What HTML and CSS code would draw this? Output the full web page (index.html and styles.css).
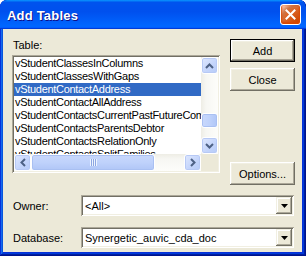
FILE: index.html
```html
<!DOCTYPE html>
<html lang="en">
<head>
    <meta charset="UTF-8">
    <title>Add Tables</title>
    <link rel="stylesheet" href="styles.css">
</head>
<body>
    <div class="window">
        <div class="titlebar">
            <span class="title">Add Tables</span>
            <button class="close">
                <svg width="11" height="11" viewBox="0 0 11 11"><path d="M1.5 1.5 L9.5 9.5 M9.5 1.5 L1.5 9.5" stroke="#fff" stroke-width="2" stroke-linecap="square"/></svg>
            </button>
        </div>
        <div class="dialog">
            <div class="top">
                <div class="table-col">
                    <div class="label">Table:</div>
                    <div class="listbox">
                        <div class="list-area">
                            <ul class="items">
                                <li>vStudentClassesInColumns</li>
                                <li>vStudentClassesWithGaps</li>
                                <li class="selected">vStudentContactAddress</li>
                                <li>vStudentContactAllAddress</li>
                                <li>vStudentContactsCurrentPastFutureCombined</li>
                                <li>vStudentContactsParentsDebtor</li>
                                <li>vStudentContactsRelationOnly</li>
                                <li>vStudentContactsSplitFamilies</li>
                            </ul>
                            <div class="vscroll">
                                <div class="sbtn">
                                    <svg width="9" height="6" viewBox="0 0 9 6"><path d="M1 5 L4.5 1.5 L8 5" fill="none" stroke="#4d6185" stroke-width="2"/></svg>
                                </div>
                                <div class="vtrack"><div class="vthumb"></div></div>
                                <div class="sbtn">
                                    <svg width="9" height="6" viewBox="0 0 9 6"><path d="M1 1 L4.5 4.5 L8 1" fill="none" stroke="#4d6185" stroke-width="2"/></svg>
                                </div>
                            </div>
                        </div>
                        <div class="hscroll-row">
                            <div class="hscroll">
                                <div class="sbtn">
                                    <svg width="6" height="9" viewBox="0 0 6 9"><path d="M5 1 L1.5 4.5 L5 8" fill="none" stroke="#4d6185" stroke-width="2"/></svg>
                                </div>
                                <div class="htrack">
                                    <div class="hthumb"><span class="grip"></span></div>
                                </div>
                                <div class="sbtn">
                                    <svg width="6" height="9" viewBox="0 0 6 9"><path d="M1 1 L4.5 4.5 L1 8" fill="none" stroke="#4d6185" stroke-width="2"/></svg>
                                </div>
                            </div>
                            <div class="corner"></div>
                        </div>
                    </div>
                </div>
                <div class="actions">
                    <button class="btn default">Add</button>
                    <button class="btn">Close</button>
                    <button class="btn options">Options...</button>
                </div>
            </div>
            <div class="fields">
                <div class="field">
                    <span class="field-label">Owner:</span>
                    <div class="combo">
                        <span class="combo-text">&lt;All&gt;</span>
                        <span class="drop"><svg width="7" height="4" viewBox="0 0 7 4"><path d="M0 0 H7 L3.5 4 Z" fill="#000"/></svg></span>
                    </div>
                </div>
                <div class="field">
                    <span class="field-label">Database:</span>
                    <div class="combo">
                        <span class="combo-text">Synergetic_auvic_cda_doc</span>
                        <span class="drop"><svg width="7" height="4" viewBox="0 0 7 4"><path d="M0 0 H7 L3.5 4 Z" fill="#000"/></svg></span>
                    </div>
                </div>
            </div>
        </div>
    </div>
</body>
</html>
```
FILE: styles.css
```css
body {
    margin: 0;
    background: #ffffff;
    font-family: 'Liberation Sans', Arial, sans-serif;
    font-size: 11px;
    color: #000;
}
.window {
    width: 306px;
    height: 256px;
    display: flex;
    flex-direction: column;
    background: #0831d9;
    border-radius: 7px 7px 0 0;
    box-shadow: inset -1px -1px #00138c, inset 1px 1px #0831d9, inset -2px -2px #001ea0, inset 2px 2px #166aee, inset -3px -3px #003bda, inset 3px 3px #0855dd;
    overflow: hidden;
}
.titlebar {
    height: 29px;
    flex: none;
    display: flex;
    align-items: center;
    justify-content: space-between;
    padding: 0 5px 0 7px;
    background: linear-gradient(180deg, #0997ff, #0053ee 8%, #0050ee 40%, #0066ff 88%, #0066ff 93%, #005bff 95%, #003dd7 96%, #003dd7);
    border-radius: 7px 7px 0 0;
}
.title {
    color: #fff;
    font-weight: bold;
    font-size: 13px;
    letter-spacing: 0.2px;
    text-shadow: 1px 1px #0f1089;
    padding-top: 1px;
}
.close {
    width: 21px;
    height: 21px;
    padding: 0;
    border: 1px solid #fff;
    border-radius: 3px;
    display: flex;
    align-items: center;
    justify-content: center;
    background: radial-gradient(circle at 90% 90%, #cc4600 0, #dc6527 55%, #cd7546 70%, #ffccb2 90%, #fff 100%);
    box-shadow: inset 0 -1px 2px 1px #da4600;
}
.dialog {
    flex: 1;
    margin: 0 4px 4px 3px;
    background: #ece9d8;
    padding: 10px 0 0 9px;
}
.top {
    display: flex;
    gap: 10px;
    height: 146px;
}
.table-col {
    width: 208px;
}
.label {
    height: 16px;
    line-height: 13px;
    padding-left: 1px;
}
.listbox {
    height: 118px;
    box-sizing: border-box;
    padding: 2px;
    background: #fff;
    box-shadow: inset 1px 1px #aca899, inset -1px -1px #fff, inset 2px 2px #716f64, inset -2px -2px #f1efe2;
    display: flex;
    flex-direction: column;
}
.list-area {
    flex: 1;
    display: flex;
    min-height: 0;
}
.items {
    flex: 1;
    margin: 0;
    padding: 0;
    list-style: none;
    overflow: hidden;
}
.items li {
    height: 13px;
    line-height: 13px;
    padding-left: 1px;
    letter-spacing: -0.3px;
    white-space: nowrap;
    overflow: hidden;
}
.items li.selected {
    background: #316ac5;
    color: #fff;
}
.vscroll {
    width: 17px;
    display: flex;
    flex-direction: column;
    background: linear-gradient(90deg, #eeede5, #f7f7f3 30%, #fdfdfa);
}
.sbtn {
    width: 17px;
    height: 17px;
    box-sizing: border-box;
    flex: none;
    display: flex;
    align-items: center;
    justify-content: center;
    border: 1px solid #fff;
    border-radius: 3px;
    background: linear-gradient(135deg, #dfe8fe, #c3d4fb 60%, #b6cbf8);
    box-shadow: inset 0 0 0 1px #b7c9f5;
}
.vtrack {
    flex: 1;
    padding-top: 39px;
}
.vthumb {
    height: 15px;
    box-sizing: border-box;
    border: 1px solid #fff;
    border-radius: 3px;
    background: linear-gradient(90deg, #c9d8fc, #bfd2fb 50%, #b0c6f7);
    box-shadow: inset 0 0 0 1px #a9c0f2;
}
.hscroll-row {
    height: 17px;
    flex: none;
    display: flex;
}
.hscroll {
    flex: 1;
    display: flex;
    background: linear-gradient(180deg, #eeede5, #f7f7f3 30%, #fdfdfa);
}
.htrack {
    flex: 1;
}
.hthumb {
    width: 124px;
    height: 17px;
    box-sizing: border-box;
    border: 1px solid #fff;
    border-radius: 3px;
    background: linear-gradient(180deg, #c9d8fc, #bfd2fb 50%, #b0c6f7);
    box-shadow: inset 0 0 0 1px #a9c0f2;
    display: flex;
    align-items: center;
    justify-content: center;
}
.grip {
    width: 7px;
    height: 7px;
    background: repeating-linear-gradient(90deg, #eef4fe 0, #eef4fe 1px, #8ca6e2 1px, #8ca6e2 2px);
}
.corner {
    width: 17px;
    background: #ece9d8;
}
.actions {
    width: 65px;
    display: flex;
    flex-direction: column;
    gap: 6px;
}
.btn {
    height: 23px;
    padding: 0;
    border: none;
    background: #ece9d8;
    font-family: 'Liberation Sans', Arial, sans-serif;
    font-size: 11px;
    color: #000;
    box-shadow: inset -1px -1px #716f64, inset 1px 1px #fff, inset -2px -2px #aca899, inset 2px 2px #f1efe2;
}
.btn.default {
    box-shadow: inset 0 0 0 1px #000, inset -2px -2px #716f64, inset 2px 2px #fff, inset -3px -3px #aca899, inset 3px 3px #f1efe2;
}
.btn.options {
    margin-top: auto;
}
.fields {
    margin-top: 10px;
    display: flex;
    flex-direction: column;
    gap: 11px;
}
.field {
    display: flex;
    align-items: center;
    height: 21px;
}
.field-label {
    width: 69px;
    padding-left: 1px;
    box-sizing: border-box;
}
.combo {
    width: 213px;
    height: 21px;
    box-sizing: border-box;
    padding: 2px;
    background: #fff;
    box-shadow: inset 1px 1px #aca899, inset -1px -1px #fff, inset 2px 2px #716f64, inset -2px -2px #f1efe2;
    display: flex;
    align-items: center;
}
.combo-text {
    flex: 1;
    padding-left: 2px;
    white-space: nowrap;
}
.drop {
    width: 16px;
    height: 17px;
    display: flex;
    align-items: center;
    justify-content: center;
    background: #ece9d8;
    box-shadow: inset -1px -1px #716f64, inset 1px 1px #f1efe2, inset -2px -2px #aca899, inset 2px 2px #fff;
}
```
